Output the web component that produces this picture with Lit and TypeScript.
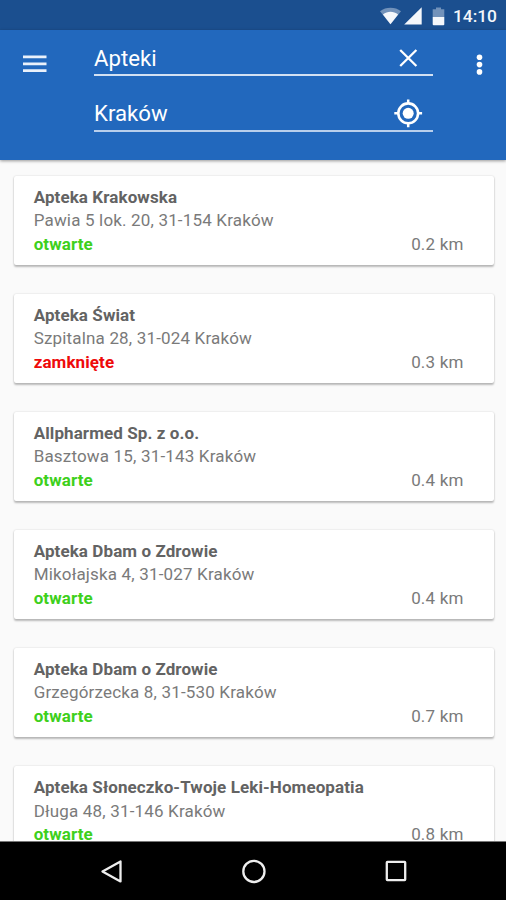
import { LitElement, html, css, svg } from 'lit';
import { customElement, property } from 'lit/decorators.js';
import { classMap } from 'lit/directives/class-map.js';

interface Pharmacy {
  name: string;
  address: string;
  open: boolean;
  distance: string;
}

const PHARMACIES: Pharmacy[] = [
  { name: 'Apteka Krakowska', address: 'Pawia 5 lok. 20, 31-154 Kraków', open: true, distance: '0.2 km' },
  { name: 'Apteka Świat', address: 'Szpitalna 28, 31-024 Kraków', open: false, distance: '0.3 km' },
  { name: 'Allpharmed Sp. z o.o.', address: 'Basztowa 15, 31-143 Kraków', open: true, distance: '0.4 km' },
  { name: 'Apteka Dbam o Zdrowie', address: 'Mikołajska 4, 31-027 Kraków', open: true, distance: '0.4 km' },
  { name: 'Apteka Dbam o Zdrowie', address: 'Grzegórzecka 8, 31-530 Kraków', open: true, distance: '0.7 km' },
  { name: 'Apteka Słoneczko-Twoje Leki-Homeopatia', address: 'Długa 48, 31-146 Kraków', open: true, distance: '0.8 km' },
];

@customElement('status-bar')
class StatusBar extends LitElement {
  static styles = css`
    :host {
      display: flex;
      flex: none;
      height: 30px;
      box-sizing: border-box;
      padding: 2px 9px 0 0;
      align-items: center;
      justify-content: flex-end;
      background: #1b4f8f;
      color: #f4f7fb;
      font-size: 17.4px;
      font-weight: 500;
    }
    svg { display: block; fill: currentColor; }
    .wifi { margin-right: 3px; }
    .cell { margin-right: 10px; }
    .battery { margin-right: 8px; }
    .faint { opacity: 0.4; }
  `;
  render() {
    return html`
      <svg class="wifi" width="21" height="18" viewBox="0 0 21 18">
        <path class="faint" d="M0 4.2C6 -.4 15 -.4 21 4.2L10.5 17.2Z" />
        <path d="M2.9 7.4C7.5 4 13.5 4 18.1 7.4L10.5 17.2Z" />
      </svg>
      <svg class="cell" width="18" height="18" viewBox="0 0 18 18"><path d="M17.7 .2V17.5H.2Z" /></svg>
      <svg class="battery" width="13" height="19" viewBox="0 0 13 19">
        <path class="faint" d="M.7 2.2H4V.4H9V2.2H12.3V10H.7Z" />
        <path d="M.7 10H12.3V17.3Q12.3 18.3 11.3 18.3H1.7Q.7 18.3 .7 17.3Z" />
      </svg>
      <span class="time">14:10</span>
    `;
  }
}

@customElement('search-header')
class SearchHeader extends LitElement {
  static styles = css`
    :host {
      display: grid;
      grid-template-columns: 94px 339px 73px;
      flex: none;
      height: 130px;
      background: #2268bd;
      color: #fff;
      box-shadow: 0 1px 3px rgba(0, 0, 0, 0.4);
      z-index: 1;
    }
    svg { display: block; }
    .menu { margin: 25px 0 0 23px; fill: #eaf1fb; }
    .more { margin: 24px 0 0 43px; fill: #fff; }
    .fields { display: flex; flex-direction: column; padding-top: 13px; }
    .field {
      display: flex;
      box-sizing: border-box;
      height: 33px;
      padding-right: 10px;
      border-bottom: 2px solid #d3e1f3;
      justify-content: space-between;
      font-size: 22.2px;
      line-height: 30px;
    }
    .city { margin-top: 22.5px; border-color: #b9cfec; line-height: 29px; }
  `;
  render() {
    return html`
      <svg class="menu" width="24" height="18" viewBox="0 0 24 18">
        <path d="M0 .5H23.5V3.3H0ZM0 7.4H23.5V10.2H0ZM0 14.3H23.5V17.1H0Z" />
      </svg>
      <div class="fields">
        <div class="field">
          <span>Apteki</span>
          <svg width="29" height="30" viewBox="0 0 29 30" fill="none" stroke="#fff" stroke-width="2.3">
            <path d="M6.2 7L22.4 23M22.4 7L6.2 23" />
          </svg>
        </div>
        <div class="field city">
          <span>Kraków</span>
          <svg width="29" height="30" viewBox="0 0 29 30" fill="none" stroke="#fff">
            <circle cx="14.2" cy="14.3" r="9.9" stroke-width="2.6" />
            <circle cx="14.2" cy="14.3" r="5.5" fill="#fff" stroke="none" />
            <path stroke-width="2.5" d="M14.2 .4V4.6M14.2 24V28.2M.3 14.3H4.5M23.9 14.3H28.1" />
          </svg>
        </div>
      </div>
      <svg class="more" width="8" height="22" viewBox="0 0 8 22">
        ${[3.3, 10.6, 17.9].map((y) => svg`<circle cx="3.5" cy=${y} r="2.8" />`)}
      </svg>
    `;
  }
}

@customElement('pharmacy-card')
class PharmacyCard extends LitElement {
  @property({ attribute: false }) pharmacy!: Pharmacy;
  static styles = css`
    :host {
      display: block;
      flex: none;
      box-sizing: border-box;
      height: 88.5px;
      padding: 9.6px 30px 0 19.7px;
      border-radius: 2px;
      background: #fff;
      box-shadow: 0 1.5px 2px rgba(0, 0, 0, 0.25), 0 0 2px rgba(0, 0, 0, 0.12);
      color: #7a7a7a;
      font-size: 17px;
      line-height: 23.5px;
      letter-spacing: 0.17px;
      white-space: nowrap;
    }
    .name { color: #636363; font-weight: 700; letter-spacing: 0.09px; }
    .foot { display: flex; justify-content: space-between; }
    .status { color: #3ed01c; font-weight: 700; letter-spacing: 0.09px; }
    .status.closed { color: #ee0a0a; }
  `;
  render() {
    const p = this.pharmacy;
    return html`
      <div class="name">${p.name}</div>
      <div>${p.address}</div>
      <div class="foot">
        <span class=${classMap({ status: true, closed: !p.open })}>${p.open ? 'otwarte' : 'zamknięte'}</span>
        <span>${p.distance}</span>
      </div>
    `;
  }
}

@customElement('nav-bar')
class NavBar extends LitElement {
  static styles = css`
    :host {
      display: grid;
      grid-template-columns: repeat(3, 142px);
      justify-content: center;
      justify-items: center;
      flex: none;
      box-sizing: border-box;
      height: 59px;
      padding-top: 17px;
      border-top: 1px solid #777;
      background: #000;
    }
    svg { fill: none; stroke: #eee; stroke-width: 2.3; }
  `;
  render() {
    return html`
      <svg width="26" height="26" viewBox="0 0 26 26"><path stroke-linejoin="round" d="M22.5 2.4V22.4L4.5 12.4Z" /></svg>
      <svg width="26" height="26" viewBox="0 0 26 26"><circle cx="13.9" cy="12.4" r="10.6" /></svg>
      <svg width="26" height="26" viewBox="0 0 26 26"><rect x="4.8" y="2.8" width="18.4" height="18.4" rx=".6" /></svg>
    `;
  }
}

@customElement('app-root')
class AppRoot extends LitElement {
  static styles = css`
    :host {
      display: flex;
      flex-direction: column;
      height: 900px;
      overflow: hidden;
      background: #fafafa;
      font-family: Roboto, 'Liberation Sans', sans-serif;
    }
    .list {
      display: flex;
      flex: 1;
      min-height: 0;
      flex-direction: column;
      gap: 29.6px;
      padding: 16px 12.5px 0 14px;
      overflow: hidden;
    }
  `;
  render() {
    return html`
      <status-bar></status-bar>
      <search-header></search-header>
      <div class="list">${PHARMACIES.map((p) => html`<pharmacy-card .pharmacy=${p}></pharmacy-card>`)}</div>
      <nav-bar></nav-bar>
    `;
  }
}
